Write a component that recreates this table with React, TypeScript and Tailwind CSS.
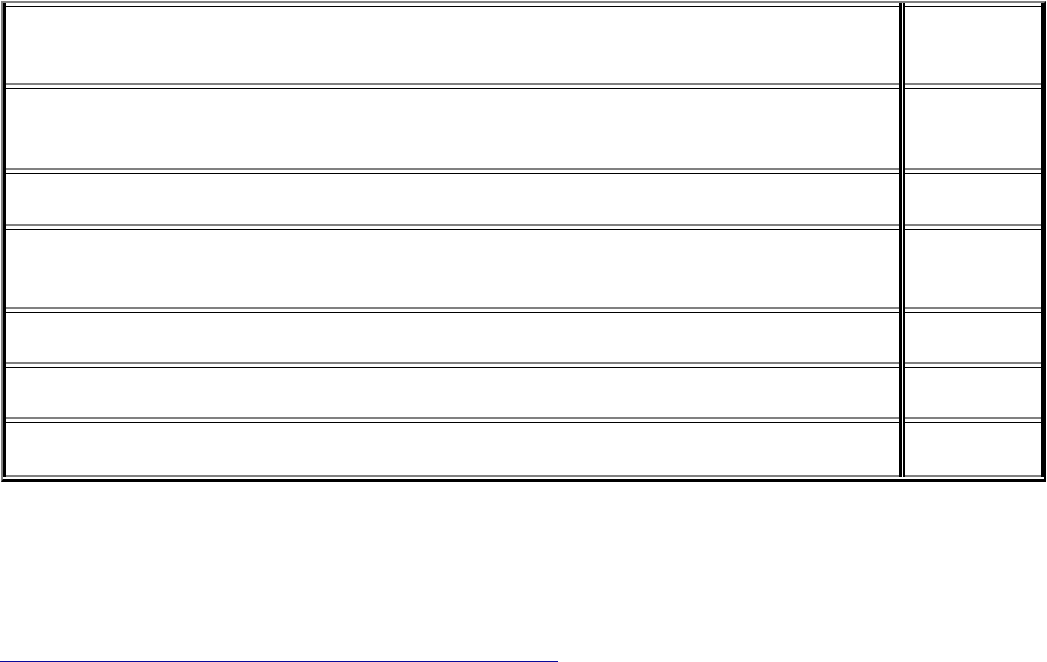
const rows = [
  { gap: "pt-[3px]", h: "h-[79px]" },
  { gap: "pt-[3px]", h: "h-[82px]" },
  { gap: "pt-[3px]", h: "h-[53px]" },
  { gap: "pt-[3px]", h: "h-[80px]" },
  { gap: "pt-[3px]", h: "h-[52px]" },
  { gap: "pt-[3px]", h: "h-[52px]" },
  { gap: "pt-[3px]", h: "h-[55px]" },
];

export default function App() {
  return (
    <div className="min-h-[662px] bg-white">
      <div className="ml-px mt-px w-[1045px] border-t-2 border-l-2 border-t-[#808080] border-l-[#808080] border-r-2 border-b-[3px] border-r-black border-b-black">
        <div className="flex flex-col pb-[2px]">
          {rows.map((row, i) => (
            <div key={i} className="flex">
              <div className={`w-[899px] border-x-[3px] border-black ${row.gap}`}>
                <div className={`${row.h} border-t border-b-2 border-t-black border-b-[#808080]`} />
              </div>
              <div className="w-px" />
              <div className={`w-[141px] border-l-2 border-r-[3px] border-black ${row.gap}`}>
                <div className={`${row.h} border-t border-b-2 border-t-black border-b-[#808080]`} />
              </div>
            </div>
          ))}
        </div>
      </div>
      <div className="mt-[179px] h-px w-[558px] bg-[#0a0a9a]" />
    </div>
  );
}
